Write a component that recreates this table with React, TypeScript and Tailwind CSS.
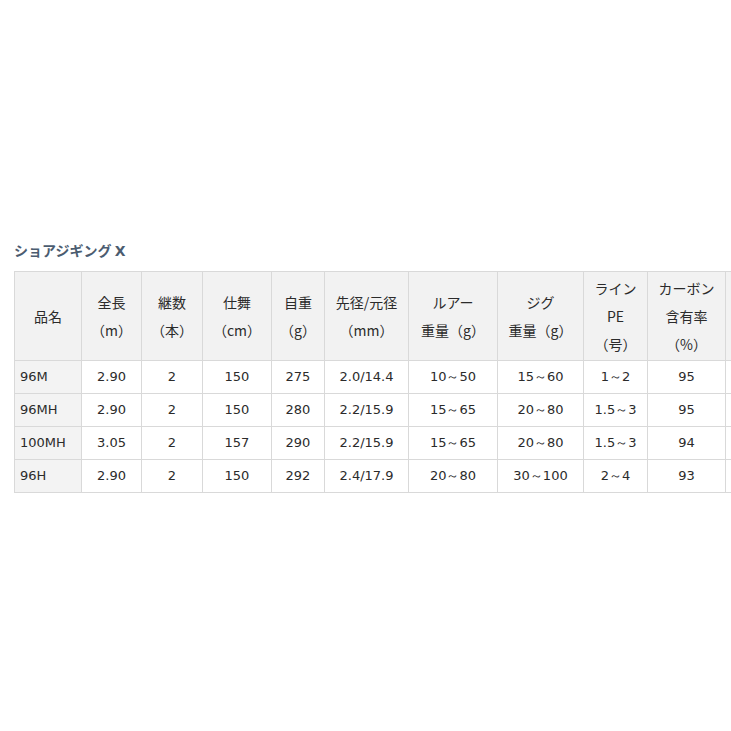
import React from "react";

const cols = [67, 60, 61, 69, 53, 84, 89, 86, 64, 78, 120];

const headers: string[][] = [
  ["品名"],
  ["全長", "（m）"],
  ["継数", "（本）"],
  ["仕舞", "（cm）"],
  ["自重", "（g）"],
  ["先径/元径", "（mm）"],
  ["ルアー", "重量（g）"],
  ["ジグ", "重量（g）"],
  ["ライン", "PE", "（号）"],
  ["カーボン", "含有率", "（%）"],
  [],
];

const rows: string[][] = [
  ["96M", "2.90", "2", "150", "275", "2.0/14.4", "10～50", "15～60", "1～2", "95", ""],
  ["96MH", "2.90", "2", "150", "280", "2.2/15.9", "15～65", "20～80", "1.5～3", "95", ""],
  ["100MH", "3.05", "2", "157", "290", "2.2/15.9", "15～65", "20～80", "1.5～3", "94", ""],
  ["96H", "2.90", "2", "150", "292", "2.4/17.9", "20～80", "30～100", "2～4", "93", ""],
];

export default function App() {
  return (
    <div className="w-[731px] h-[731px] overflow-hidden bg-white pt-[240px] pl-[14px]">
      <h2 className="text-[14px] leading-[20px] font-bold text-[#4b5c70] font-['Noto_Sans_CJK_JP',sans-serif] mb-[10px]">
        ショアジギング <span className="font-['DejaVu_Sans',sans-serif] text-[14px]">X</span>
      </h2>
      <table className="table-fixed border-collapse w-[831px] text-[#2b2b2b]">
        <colgroup>
          {cols.map((w, i) => (
            <col key={i} style={{ width: w }} />
          ))}
        </colgroup>
        <thead>
          <tr>
            {headers.map((lines, i) => (
              <th
                key={i}
                className="h-[89px] p-0 border border-[#d9d9d9] bg-[#f2f2f2] font-normal text-center align-middle text-[14px] leading-[28px] font-['Noto_Sans_CJK_JP',sans-serif] whitespace-nowrap"
              >
                {lines.map((l, j) => (
                  <div key={j}>{l}</div>
                ))}
              </th>
            ))}
          </tr>
        </thead>
        <tbody>
          {rows.map((r, i) => (
            <tr key={i}>
              {r.map((c, j) => (
                <td
                  key={j}
                  className={
                    j === 0
                      ? "h-[33px] p-0 pl-[5px] border border-[#d9d9d9] bg-[#f3f3f3] text-left text-[13px] font-['DejaVu_Sans',sans-serif] whitespace-nowrap"
                      : "h-[33px] p-0 border border-[#d9d9d9] bg-white text-center text-[13px] font-['DejaVu_Sans',sans-serif] whitespace-nowrap"
                  }
                >
                  {c}
                </td>
              ))}
            </tr>
          ))}
        </tbody>
      </table>
    </div>
  );
}
